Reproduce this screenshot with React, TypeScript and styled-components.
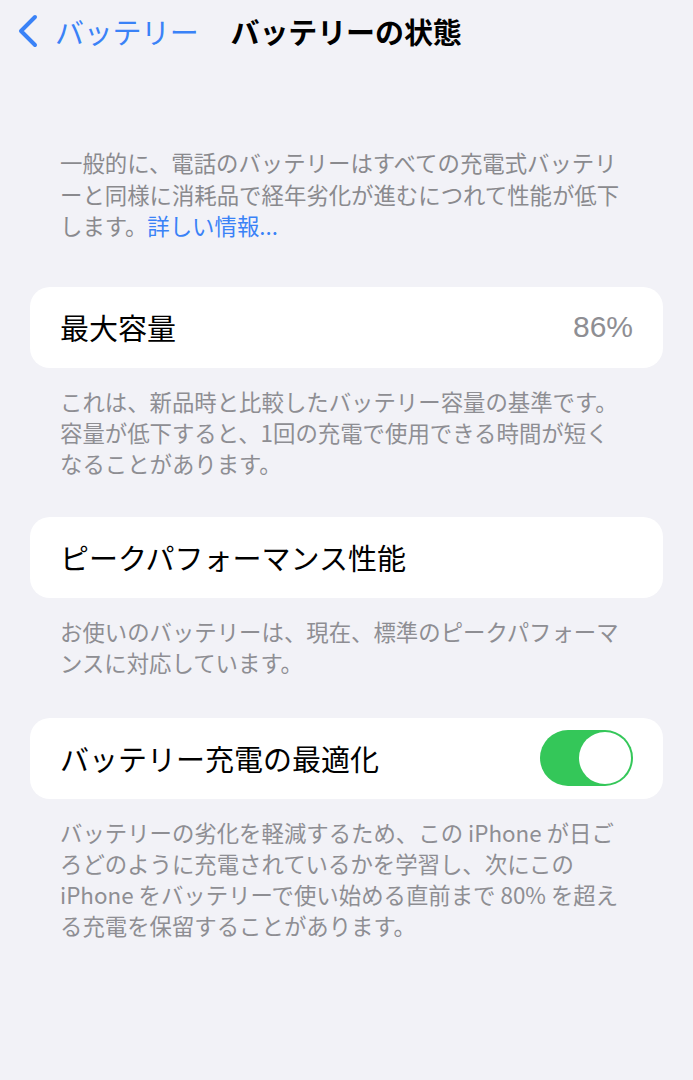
import styled, { createGlobalStyle } from "styled-components";

const GlobalStyle = createGlobalStyle`
  html, body {
    margin: 0;
    padding: 0;
    background: #f2f2f7;
  }
  body {
    font-family: "Noto Sans CJK JP", "Noto Sans", sans-serif;
    color: #000;
    -webkit-font-smoothing: antialiased;
  }
`;

const Screen = styled.div`
  width: 693px;
  min-height: 1080px;
  background: #f2f2f7;
  box-sizing: border-box;
`;

const NavBar = styled.div`
  height: 62px;
  display: flex;
  align-items: center;
  padding-left: 17px;
`;

const BackButton = styled.div`
  display: flex;
  align-items: center;
  gap: 16px;
  color: #3a82f7;
  font-size: 29px;
  line-height: 1;
  letter-spacing: -0.3px;

  svg {
    width: 22px;
    height: 34px;
  }
`;

const NavTitle = styled.div`
  margin-left: 32px;
  font-size: 29px;
  font-weight: 700;
  line-height: 1;
  letter-spacing: -0.1px;
`;

const Content = styled.div`
  padding: 0 30px;
`;

const Intro = styled.p`
  margin: 85px 0 0;
  padding: 0 20px 0 60px;
  font-size: 22.4px;
  line-height: 31.5px;
  color: #8a8a8e;
  white-space: nowrap;
`;

const Link = styled.span`
  color: #3a82f7;
`;

const Card = styled.div<{ $top: number }>`
  margin-top: ${(p) => p.$top}px;
  height: 81px;
  background: #fff;
  border-radius: 20px;
  display: flex;
  align-items: center;
  justify-content: space-between;
  padding: 0 30px;
`;

const Label = styled.div`
  font-size: 29px;
  line-height: 1;
`;

const Value = styled.div`
  font-size: 30px;
  line-height: 1;
  color: #8e8e93;
  font-family: "Liberation Sans", "Noto Sans CJK JP", sans-serif;
`;

const Footnote = styled.p`
  margin: 0;
  padding: 18px 20px 0 60px;
  font-size: 22.4px;
  line-height: 31px;
  color: #8e8e93;
  white-space: nowrap;
`;

const Track = styled.div`
  width: 93px;
  height: 56px;
  border-radius: 28px;
  background: #34c759;
  display: flex;
  justify-content: flex-end;
  align-items: center;
  padding: 2px;
  box-sizing: border-box;
`;

const Knob = styled.div`
  width: 52px;
  height: 52px;
  border-radius: 50%;
  background: #fff;
`;

const Chevron = () => (
  <svg viewBox="0 0 22 34" fill="none">
    <path
      d="M18 3L4 17L18 31"
      stroke="currentColor"
      strokeWidth={4}
      strokeLinecap="round"
      strokeLinejoin="round"
    />
  </svg>
);

export default function App() {
  return (
    <Screen>
      <GlobalStyle />
      <NavBar>
        <BackButton>
          <Chevron />
          <span>バッテリー</span>
        </BackButton>
        <NavTitle>バッテリーの状態</NavTitle>
      </NavBar>

      <Intro>
        一般的に、電話のバッテリーはすべての充電式バッテリ
        <br />
        ーと同様に消耗品で経年劣化が進むにつれて性能が低下
        <br />
        します。<Link>詳しい情報...</Link>
      </Intro>

      <Content>
        <Card $top={45}>
          <Label>最大容量</Label>
          <Value>86%</Value>
        </Card>
      </Content>
      <Footnote>
        これは、新品時と比較したバッテリー容量の基準です。
        <br />
        容量が低下すると、1回の充電で使用できる時間が短く
        <br />
        なることがあります。
      </Footnote>

      <Content>
        <Card $top={38}>
          <Label>ピークパフォーマンス性能</Label>
        </Card>
      </Content>
      <Footnote>
        お使いのバッテリーは、現在、標準のピークパフォーマ
        <br />
        ンスに対応しています。
      </Footnote>

      <Content>
        <Card $top={40}>
          <Label>バッテリー充電の最適化</Label>
          <Track>
            <Knob />
          </Track>
        </Card>
      </Content>
      <Footnote>
        バッテリーの劣化を軽減するため、この iPhone が日ご
        <br />
        ろどのように充電されているかを学習し、次にこの
        <br />
        iPhone をバッテリーで使い始める直前まで 80% を超え
        <br />
        る充電を保留することがあります。
      </Footnote>
    </Screen>
  );
}
